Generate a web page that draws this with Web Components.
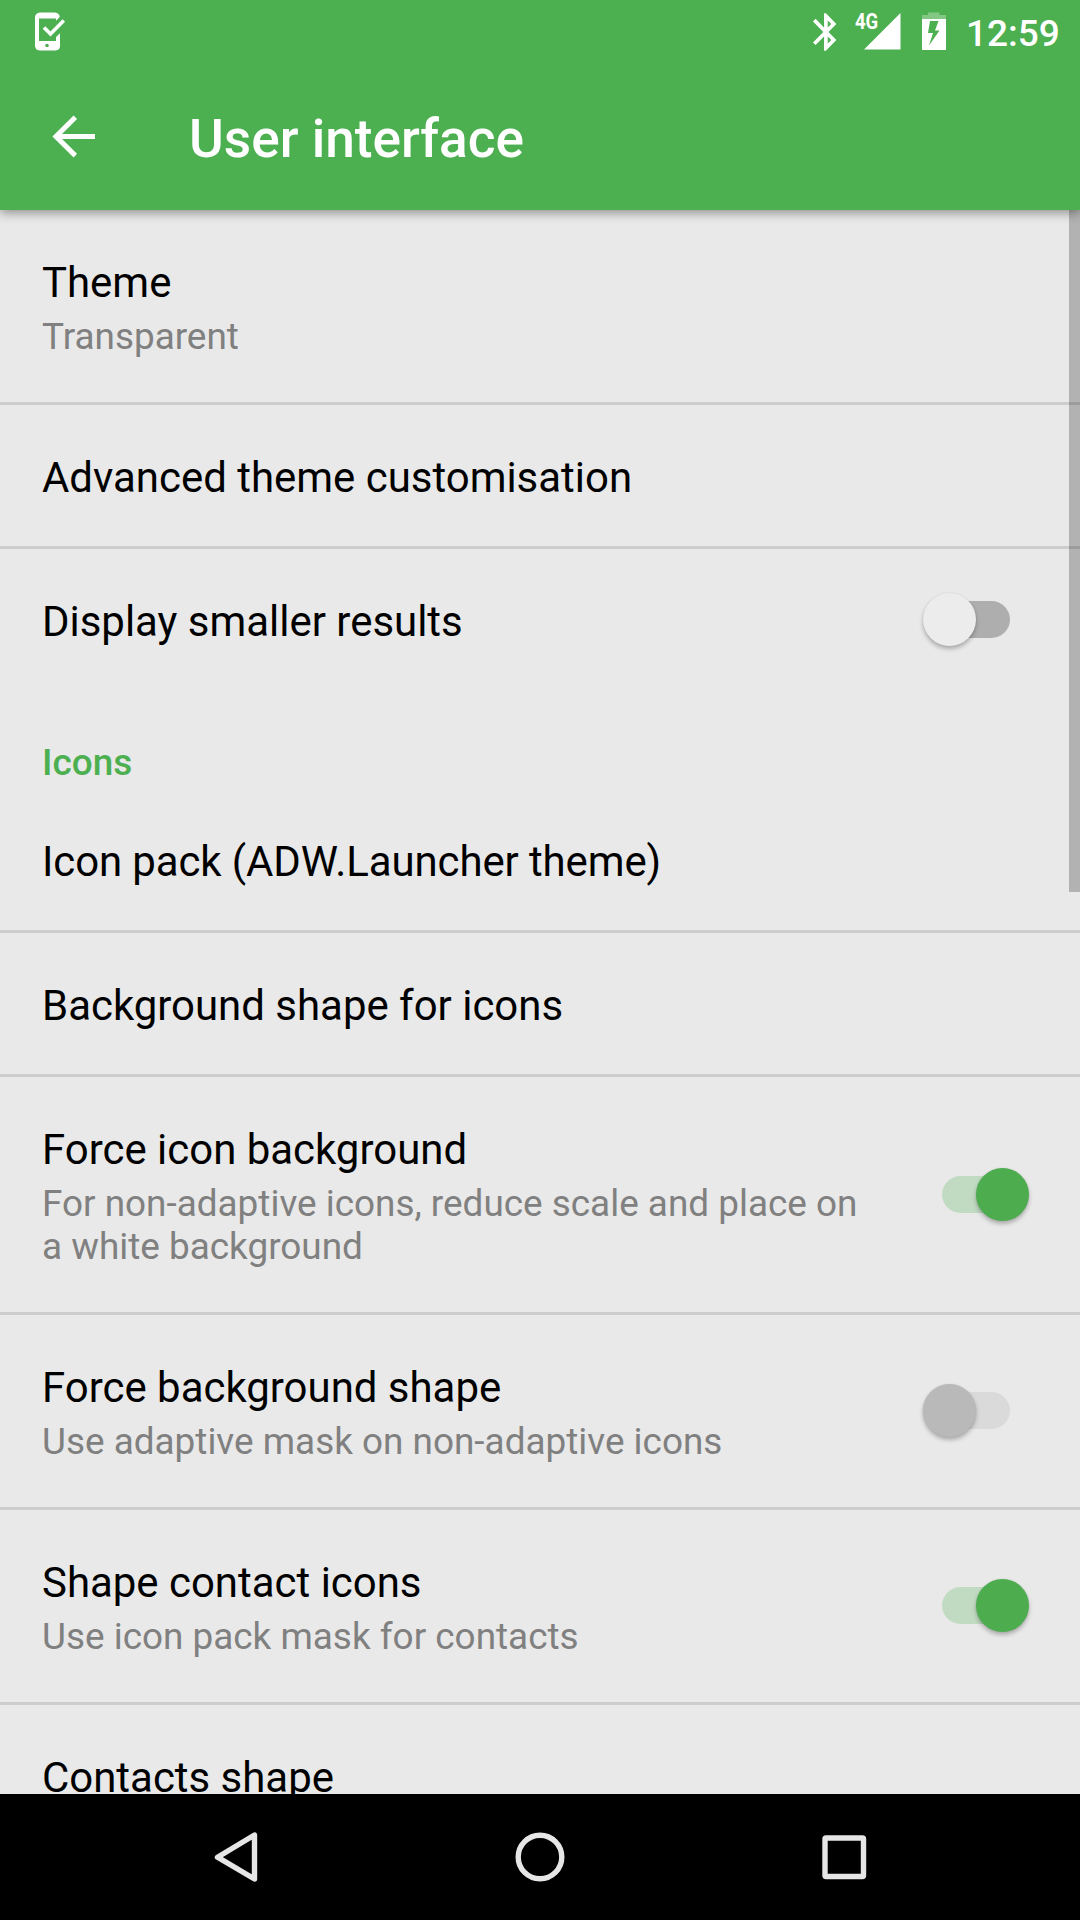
<!DOCTYPE html>
<html lang="en"><head><meta charset="utf-8"><title>User interface</title>
<style>html,body{margin:0;height:1920px;overflow:hidden;background:#e9e9e9}</style></head><body>
<settings-screen></settings-screen>
<script>
const define=(name,html,setup)=>customElements.define(name,class extends HTMLElement{
  constructor(){super();const t=document.createElement('template');t.innerHTML=html;
    this.attachShadow({mode:'open'}).append(t.content.cloneNode(true));}
  connectedCallback(){if(setup)setup(this)}
});
define('status-bar',`<style>
:host{display:flex;height:72px;align-items:flex-start;color:#fff;box-sizing:border-box;padding-left:35px}
svg{display:block;flex:none}.gap{flex:1}
.clock{font-size:37px;font-weight:500;line-height:45px;margin-top:11px;width:114px;padding-left:19px;white-space:nowrap}
.net{display:flex;margin-left:18px;width:46px;height:72px;position:relative}
.net span{position:absolute;left:0;top:9px;font:700 21.5px/25px Roboto,sans-serif;transform:scaleX(.86);transform-origin:0 0}
</style>
<svg width="31" height="72" viewBox="35 0 31 72"><path fill="#fff" fill-rule="evenodd" d="M40 12.5H55Q59.5 13 59.7 17L56 20.7V18.5H39V41H56V37L60 33.3V46Q60 50 55.5 50.5H39.5Q35.3 50 35 46V17Q35.3 13 40 12.5ZM45 45.5L46 44H48L49 45.5L48 47H46Z"/><path fill="none" stroke="#fff" stroke-width="3.6" d="M44 27.5L50.5 34L63.8 20.6"/></svg>
<div class="gap"></div>
<svg width="24" height="72" viewBox="813 0 24 72"><path fill="#fff" transform="translate(803.8 9.5) scale(1.84 1.87)" d="M17.71 7.71L12 2h-1v7.59L6.41 5 5 6.41 10.59 12 5 17.59 6.41 19 11 14.41V22h1l5.71-5.71-4.3-4.29 4.3-4.29zM13 5.83l1.88 1.88L13 9.59V5.83zm1.88 10.46L13 18.17v-3.76l1.88 1.88z"/></svg>
<div class="net"><svg width="46" height="72" viewBox="855 0 46 72"><path fill="#fff" d="M864 49.5L900.5 13V49.5Z"/></svg><span>4G</span></div>
<svg width="25" height="72" viewBox="922 0 25 72" style="margin-left:21px"><path fill="#fff" opacity=".3" d="M922 19V15H928V12.5H939.5V15H946V19Z"/><path fill="#fff" fill-rule="evenodd" d="M922 19H946V50H922ZM930 21L928 33H933L929 45.5L939.5 30.5H935L938.5 21Z"/></svg>
<div class="clock">12:59</div>`);
define('app-bar',`<style>
:host{display:flex;height:138px;align-items:flex-start;color:#fff;padding:43px 0 0 52px;box-sizing:border-box}
svg{display:block;flex:none}
h1{margin:-7px 0 0 93px;font-size:53.2px;font-weight:500;line-height:62px;white-space:nowrap}
</style><svg width="44" height="44" viewBox="52 115 44 44"><path fill="none" stroke="#fff" stroke-width="5" d="M95 136.6H56M75.3 117.3L56 136.6L75.3 155.6"/></svg><h1><slot></slot></h1>`);
define('pref-switch',`<style>
:host{--track:#aeaeae;--thumb:#ececec;display:flex;align-items:center;width:107px;height:53px;flex:none;position:relative}
:host([on]){--track:#c1dbc2;--thumb:#4cac4e}
:host([disabled]){--track:#dadada;--thumb:#b9b9b9}
.track{width:68px;height:37px;margin-left:19px;background:var(--track);border-radius:0 18.5px 18.5px 0}
:host([on]) .track{border-radius:18.5px 0 0 18.5px}
.thumb{position:absolute;left:0;top:0;width:53px;height:53px;border-radius:50%;background:var(--thumb);box-shadow:0 3px 4px rgba(0,0,0,.26),0 0 2px rgba(0,0,0,.08)}
:host([on]) .thumb{left:53px}
</style><div class="track"></div><div class="thumb"></div>`);
define('pref-row',`<style>
:host{display:flex;align-items:center;box-sizing:border-box;min-height:144px;padding-left:42px;padding-right:50px;border-bottom:3px solid #cdcdcd}
:host([last]){min-height:141px;border-bottom:none}
.text{flex:1;padding:48px 0 44px}
:host([summary]) .text{padding:48px 0 44px}
.title{font-size:41.95px;line-height:49px;color:#000;white-space:nowrap}
.summary{font-size:36.9px;line-height:43px;color:#808080;margin-top:8px;width:830px}
</style><div class="text"><div class="title"><slot></slot></div></div><slot name="widget"></slot>`,el=>{
  const s=el.getAttribute('summary');
  if(s&&!el.shadowRoot.querySelector('.summary')){const d=document.createElement('div');d.className='summary';d.textContent=s;el.shadowRoot.querySelector('.text').append(d)}
});
define('pref-category',`<style>
:host{display:block;box-sizing:border-box;height:99px;padding:51px 0 0 42px;font-size:36.9px;line-height:43px;font-weight:500;color:#4caf50}
</style><slot></slot>`);
define('nav-bar',`<style>
:host{display:flex;height:126px;background:#000;justify-content:space-between;padding:0 209px 0 209px;box-sizing:border-box;align-items:center;flex:none}
svg{display:block}
</style><svg width="56" height="56" viewBox="209 1829 56 56"><path fill="none" stroke="#e6e6e6" stroke-width="5.4" stroke-linejoin="round" d="M254.5 1835V1879L217.5 1857.2Z"/></svg>
<svg width="56" height="56" viewBox="512 1829 56 56"><circle cx="540" cy="1857" r="21.8" fill="none" stroke="#e6e6e6" stroke-width="5.4"/></svg>
<svg width="56" height="56" viewBox="815 1829 56 56"><rect x="825" y="1838" width="38.5" height="38.5" rx="1" fill="none" stroke="#e6e6e6" stroke-width="5.4"/></svg>`);
define('settings-screen',`<style>
:host{display:flex;flex-direction:column;width:1080px;height:1920px;background:#e9e9e9;font-family:Roboto,sans-serif}
header{background:#4caf50;flex:none;position:relative;z-index:2;box-shadow:0 3px 10px rgba(0,0,0,.38)}
main{flex:1;min-height:0;overflow:hidden;position:relative}
.bar{position:absolute;right:0;top:0;width:11px;height:682px;background:rgba(0,0,0,.235)}
.tight{letter-spacing:-.1px}
.odd{margin-bottom:1px}
nav-bar{z-index:3;position:relative}
</style>
<header><status-bar></status-bar><app-bar>User interface</app-bar></header>
<main>
<pref-row summary="Transparent">Theme</pref-row>
<pref-row>Advanced theme customisation</pref-row>
<pref-row last>Display smaller results<pref-switch slot="widget"></pref-switch></pref-row>
<pref-category>Icons</pref-category>
<pref-row class="tight">Icon pack (ADW.Launcher theme)</pref-row>
<pref-row>Background shape for icons</pref-row>
<pref-row summary="For non-adaptive icons, reduce scale and place on a white background">Force icon background<pref-switch slot="widget" on></pref-switch></pref-row>
<pref-row summary="Use adaptive mask on non-adaptive icons">Force background shape<pref-switch class="odd" slot="widget" disabled></pref-switch></pref-row>
<pref-row summary="Use icon pack mask for contacts">Shape contact icons<pref-switch class="odd" slot="widget" on></pref-switch></pref-row>
<pref-row>Contacts shape</pref-row>
<div class="bar"></div>
</main>
<nav-bar></nav-bar>`);
</script></body></html>
